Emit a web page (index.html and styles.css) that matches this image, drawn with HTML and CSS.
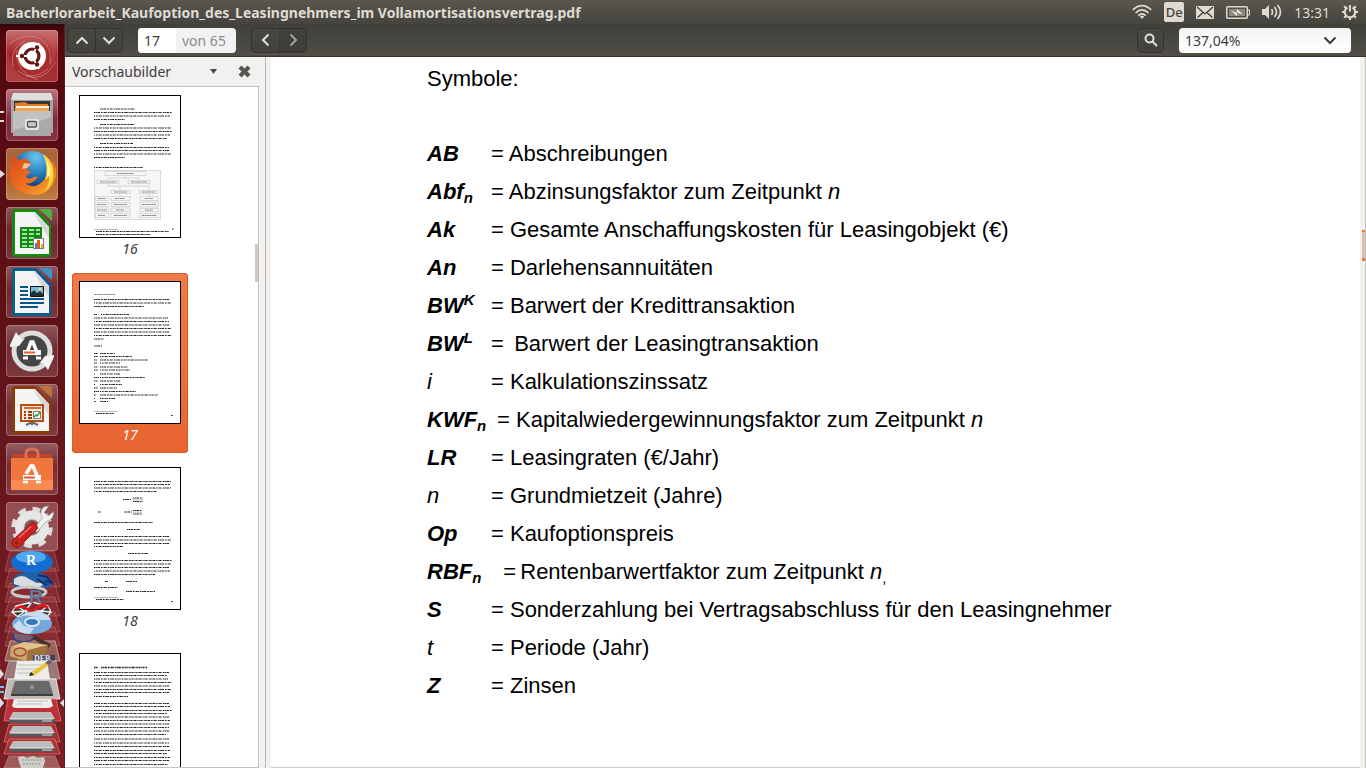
FILE: index.html
```html
<!DOCTYPE html>
<html lang="de">
<head>
<meta charset="utf-8">
<title>Bacherlorarbeit_Kaufoption_des_Leasingnehmers_im Vollamortisationsvertrag.pdf</title>
<link rel="stylesheet" href="styles.css">
</head>
<body>
<div class="desktop">
  <header class="panel">
    <h1 class="panel-title">Bacherlorarbeit_Kaufoption_des_Leasingnehmers_im Vollamortisationsvertrag.pdf</h1>
    <div class="indicators">
      <svg width="20" height="16" viewBox="0 0 20 16" fill="none" stroke="#dfdbd2" stroke-width="1.7"><path d="M.8 5.8Q10-2.4 19.2 5.8M3.6 8.8Q10 3 16.4 8.8M6.3 11.6Q10 8.400 13.7 11.6"/><path d="M7.800 12.600Q10 11 12.200 12.600L10 15z" fill="#dfdbd2" stroke="none"/></svg>
      <span class="keyboard">De</span>
      <svg width="18" height="13" viewBox="0 0 18 13"><path d="M0 0h18v13H0z" fill="#dfdbd2"/><path d="M1 1l8 7 8-7M1.500 11.500L7 6.500M16.500 11.500L11 6.500" fill="none" stroke="#3f3e39" stroke-width="1.300"/></svg>
      <svg width="24" height="13" viewBox="0 0 24 13"><rect x=".75" y=".75" width="20.500" height="11.500" rx="1" fill="none" stroke="#dfdbd2" stroke-width="1.500"/><path d="M3 3h16v7H3z" fill="#8b8981"/><path d="M21.500 4h2v5h-2" fill="none" stroke="#dfdbd2" stroke-width="1.200"/><path d="M5 4.500l6 2.500V3l6 5.500-6-2V10z" fill="#efece6"/></svg>
      <svg width="20" height="16" viewBox="0 0 20 16"><path d="M0 5h3l4-4v14l-4-4H0z" fill="#dfdbd2"/><path d="M9.500 5q2 3 0 6M12.500 3q4 5 0 10M15.500 1q6 7 0 14" fill="none" stroke="#dfdbd2" stroke-width="1.700"/></svg>
      <time class="clock">13:31</time>
      <svg width="16" height="16" viewBox="0 0 16 16" fill="none" stroke="#dfdbd2"><path d="M5.500 3.500a5.200 5.200 0 1 0 5 0" stroke-width="2"/><path d="M8 1v6.500" stroke-width="2"/><path d="M8 13v3M0 8h3M13 8h3M2.200 2.200l2 2M13.800 2.200l-2 2M2.200 13.800l2-2M13.800 13.800l-2-2" stroke-width="2.200"/></svg>
    </div>
  </header>

  <div class="workspace">
    <nav class="launcher" aria-label="Starter">
      <button class="tile dash" aria-label="Dash-Startseite"><svg viewBox="0 0 52 52"><g fill="none" stroke="#e39a98" stroke-opacity=".55"><path d="M3 14Q18 2 33 8 47 16 44 34M7 37Q3 18 19 11M12 41Q26 52 42 39M20 46Q39 52 50 31M10 20Q10 43 32 50"/></g><path d="M14 0Q35-1 44 15q4 13-3 25 11-9 10-28Q50 0 42 0zM2 20q1 25 25 31H5q-4 0-4-5z" fill="#d47572" opacity=".25"/><circle cx="26" cy="26" r="14" fill="#fff"/><circle cx="26" cy="26" r="7" fill="none" stroke="#631414" stroke-width="3.200"/><path d="M26 26H10M26 26l7-13M26 26l7 13" stroke="#fff" stroke-width="1.800"/><g fill="#631414"><circle cx="16" cy="26" r="2.200"/><circle cx="31" cy="17.500" r="2.200"/><circle cx="31" cy="34.500" r="2.200"/></g></svg></button>
      <button class="tile files" aria-label="Dateien"><svg viewBox="0 0 52 52"><path d="M7 4h38l2 8v32H5V12z" fill="#a5a5a5"/><path d="M7 4h38l2 7H5z" fill="#dedede"/><path d="M8 12h36v12H8z" fill="#363636"/><path d="M9 14l10-1 3 2h20v8H9z" fill="#e67a22"/><path d="M10 17h33v5H10z" fill="#fff0dd"/><path d="M9 19h34v5H9z" fill="#f3a44d"/><path d="M7 22h38v25H7z" fill="#a9a9a9"/><path d="M7 22h38v6L7 42z" fill="#c1c1c1"/><rect x="19" y="30" width="14" height="11" rx="2" fill="#e4e4e4"/><rect x="21.500" y="32.500" width="9" height="5.500" rx="1" fill="#c9c9c9" stroke="#555" stroke-width="1.300"/></svg></button>
      <button class="tile firefox" aria-label="Firefox"><svg viewBox="0 0 52 52"><defs><radialGradient id="globe" cx=".6" cy=".15" r=".8"><stop offset="0" stop-color="#68c5ed"/><stop offset=".55" stop-color="#2275b5"/><stop offset="1" stop-color="#102e63"/></radialGradient><linearGradient id="fox" x1="0" y1="0" x2="1" y2="1"><stop offset="0" stop-color="#d9481c"/><stop offset=".6" stop-color="#ef7622"/><stop offset="1" stop-color="#f8ba30"/></linearGradient></defs><circle cx="26" cy="24" r="21" fill="url(#globe)"/><path d="M7 8q4 1 6 4 6-3 10 1l2 4-5 4 5 3-5 4q2 5 8 1 4-2 3 1-5 7-12 5 8 7 17-1 8-7 6-17 8 8 6 13 2-8-4-20 10 10 4 24-7 14-21 13Q7 45 4 30q-1-9 3-22z" fill="url(#fox)"/><path d="M37 6q13 9 10 24-2 9-8 13 5-9 4-15-2 3-4 4 4-13-2-26z" fill="#ffd93a"/><path d="M39 10q7 10 5 19l-3-2q2-8-2-17z" fill="#fff5a0"/><path d="M18 15l7 1-4 4-5 1z" fill="#ffc091"/></svg></button>
      <button class="tile office" aria-label="LibreOffice Calc"><svg viewBox="0 0 52 52"><path d="M9 2h21l15 16v30q0 2-2 2H9q-3 0-3-3V5q0-3 3-3z" fill="#168b12"/><path d="M33 2h10q3 0 3 3v9z" fill="#52ad43"/><path d="M9 5h20l14 15v27H9z" fill="#f5f5f5"/><path d="M27 5l16 15v12z" fill="#d8d8d8"/><path d="M14 20h22v21H14z" fill="#128813"/><path d="M16 22h5v2h-5zM23 22h5v2h-5zM30 22h4v2h-4zM16 26h5v2h-5zM23 26h5v2h-5zM30 26h4v2h-4zM16 30h5v2h-5zM23 30h5v2h-5zM16 34h5v2h-5zM23 34h4v2h-4zM16 38h5v2h-5zM23 38h4v2h-4z" fill="#9be89c"/><path d="M27.500 31.500h10v10h-10z" fill="#fff" stroke="#777"/><path d="M29 36h2v5h-2z" fill="#2b8dcd"/><path d="M31 33h3v8h-3z" fill="#e65a17"/><path d="M35 37h2v4h-2z" fill="#ecb338"/></svg></button>
      <button class="tile office" aria-label="LibreOffice Writer"><svg viewBox="0 0 52 52"><path d="M9 2h21l15 16v30q0 2-2 2H9q-3 0-3-3V5q0-3 3-3z" fill="#0b5d91"/><path d="M33 2h10q3 0 3 3v9z" fill="#3c93ca"/><path d="M9 5h20l14 15v27H9z" fill="#f5f5f5"/><path d="M27 5l16 15v12z" fill="#d8d8d8"/><path d="M14 21h8M14 25h8M14 29h8M14 33h24M14 37h24M14 41h18" stroke="#08558b" stroke-width="2"/><path d="M24.500 20.500h13v10h-13z" fill="#76bce7" stroke="#111"/><path d="M25 30v-3l3-3 3 3 3-2 3 3v2z" fill="#27313a"/><circle cx="34" cy="23" r="1.500" fill="#ffe269"/></svg></button>
      <button class="tile" aria-label="Aktualisierungsverwaltung"><svg viewBox="0 0 52 52"><circle cx="26" cy="26" r="18" fill="#454545" stroke="#ddd" stroke-width="5"/><path d="M4 20L10 7l5 7 4-1-6 8-9 1zM48 32l-6 13-5-7-4 1 6-8 9-1z" fill="#f3f3f3"/><path d="M20 30L25 17h2l5 13" fill="none" stroke="#fff" stroke-width="3.500"/><path d="M17 25h18v5H17z" fill="#fff"/><path d="M18 26.500h11v2H18z" fill="#ee5b23"/><path d="M17 33h5M30 33h5" stroke="#fff" stroke-width="3"/></svg></button>
      <button class="tile office" aria-label="LibreOffice Impress"><svg viewBox="0 0 52 52"><path d="M9 2h21l15 16v30q0 2-2 2H9q-3 0-3-3V5q0-3 3-3z" fill="#8e3b0b"/><path d="M33 2h10q3 0 3 3v9z" fill="#bd733d"/><path d="M9 5h20l14 15v27H9z" fill="#f5f5f5"/><path d="M27 5l16 15v12z" fill="#d8d8d8"/><path d="M15 21h22v16H15z" fill="#fdece0" stroke="#b84a13" stroke-width="2"/><path d="M18 24h17" stroke="#d66b2b" stroke-width="2"/><path d="M18 28h2M18 31h2M18 34h2M22 28h4M22 31h4M22 34h4" stroke="#983c0c" stroke-width="2"/><path d="M27.500 27.500h7v7h-7z" fill="#fff" stroke="#777"/><path d="M28 33l2-2 1 1 3-4" fill="none" stroke="#249922" stroke-width="1.300"/><path d="M20 41l6-3 6 3M26 38v3" fill="none" stroke="#666" stroke-width="2"/></svg></button>
      <button class="tile" aria-label="Ubuntu Software-Center"><svg viewBox="0 0 52 52"><path d="M7 11h38l2 36H5z" fill="#ed682d"/><path d="M7 11h38v10H7z" fill="#bf4520"/><path d="M5 15h42v22H5z" fill="#f1763c"/><path d="M5 37h42v10H5z" fill="#f88a52"/><path d="M20 17V10q0-4 6-4t6 4v7" fill="none" stroke="#d86f50" stroke-width="3"/><path d="M20 31L25 23h2l5 12" fill="none" stroke="#fff" stroke-width="3.500"/><path d="M17 32h18v5H17z" fill="#fff"/><path d="M18 33.500h11v2H18z" fill="#ee5b23"/><path d="M17 39h5M30 39h5" stroke="#fff" stroke-width="2.500"/></svg></button>
      <button class="tile settings" aria-label="Systemeinstellungen"><svg viewBox="0 0 52 52"><circle cx="26" cy="27" r="19" fill="none" stroke="#ddd" stroke-width="6" stroke-dasharray="8 6.920"/><circle cx="26" cy="27" r="13" fill="none" stroke="#e6e6e6" stroke-width="10"/><circle cx="26" cy="27" r="8.500" fill="#8c5354" stroke="#bbb"/><path d="M28 28L37 17q-4-8 2-12l5-1-5 7 4 4 6-5q0 9-7 10L31 32z" fill="#f2f2f2" stroke="#888" stroke-width=".6"/><path d="M26 22q5 0 6 6L14 46q-4 4-8 1-3-4 1-8z" fill="#ce2221" stroke="#8b1010"/><path d="M12 38l13-12" stroke="#ee716b" stroke-width="1.500"/><circle cx="9.500" cy="43.500" r="1.600" fill="#631"/></svg></button>
      <svg class="stack" width="65" height="217" viewBox="0 0 65 217" aria-hidden="true">
        <g fill="#b65a5c" fill-opacity=".28" stroke="#d99a9a" stroke-opacity=".5" stroke-width=".7"><path d="M10 0h44l5 20H5z"/><path d="M10 17h45l5 19H5z"/><path d="M10 32h45l5 19H5z"/><path d="M10 46h45l5 19H5z"/><path d="M10 61h45l5 20H5z"/><path d="M10 76h45l5 19H5z"/></g>
        <path d="M10 90h45l5 20H5z" fill="#a67e70" fill-opacity=".7" stroke="#c6a295"/>
        <ellipse cx="32" cy="11" rx="21" ry="11" fill="#146bd0"/><ellipse cx="31" cy="6" rx="15" ry="6" fill="#4ea7f0"/><text class="blue-r" x="26" y="14">R</text>
        <path d="M12 32q1-9 12-10 20-3 27 6 3 7-5 9H17z" fill="#2061a5"/><path d="M14 28q8-6 15 0l8 4q4-1 6 2-7 5-17 3l-12-4z" fill="#dadce0"/><path d="M38 24l9 2 5 6-7-2M37 28l10 6" fill="none" stroke="#112e69" stroke-width="2"/>
        <ellipse cx="29" cy="41" rx="17" ry="5" fill="none" stroke="#c7cac6" stroke-width="3"/>
        <path d="M16 55l16-4 16 4 3 6-6 6-13 1-14-2-6-5zM16 55l9 5-8 6M32 51l-7 9 7 8 9-8 7-5M25 60h16l10 1M12 61l13-1M41 60l4 7" fill="#3b373a" stroke="#f4f4f4" stroke-width="1.300"/><text class="grey-r" x="29" y="52">R</text><path d="M15 58q7-5 12 0t10-1 11 0" fill="none" stroke="#e4171d" stroke-width="2.500"/>
        <ellipse cx="32" cy="73" rx="20" ry="10" fill="#77a8dc"/><path d="M18 67q10-6 22 2h11q-2-6-11-8-14-2-22 6zM13 75q5 8 17 8l4-6-10-2-5-6z" fill="#c4dcf2"/><ellipse cx="32" cy="71" rx="7" ry="4" fill="#3475bb" stroke="#d9e9f8" stroke-width="2"/>
        <path d="M13 82q-1 9 10 9 10 0 12-6" fill="#785f70" stroke="#40417e" stroke-width="2"/><path d="M33 86l17 9" stroke="#463130" stroke-width="4"/>
        <path d="M11 96l13-5 24 3-5 15-17 2-16-5z" fill="#9e733c"/><path d="M11 96l17 3-2 11-16-5z" fill="#cdaa6a"/><path d="M11 96l13-5 24 3-20 5z" fill="#e0c28b"/><ellipse cx="20" cy="101" rx="6" ry="4" fill="none" stroke="#b24243" stroke-width="1.500"/><path d="M33 104h22v6H33z" fill="#42405d"/>
        <path d="M9 110h47l4 18H4z" fill="#aaa09e" fill-opacity=".7" stroke="#ddd" stroke-opacity=".5"/><text class="deb" x="34" y="110">DEB</text><path d="M17 110h30l3 18H14z" fill="#ecece9"/><path d="M18 114h25M17 118h26M17 122h20" stroke="#c1c1be"/><path d="M30 122l15-10 4 2-14 10-6 1z" fill="#e9c238"/><path d="M45 112l4-3 3 2-3 3z" fill="#6b5368"/><path d="M29 125l2-4 3 3z" fill="#222"/>
        <path d="M8 128h48l4 20H4z" fill="#c2b9b7" stroke="#fff" stroke-opacity=".75"/><path d="M15 130h34l4 13H11z" fill="#696969"/><path d="M11 143h42v2H11z" fill="#3e3e3e"/><circle cx="32" cy="136" r="2" fill="#999"/>
        <path d="M8 148h48l5 22H4z" fill="#be3037" stroke="#d88484" stroke-width=".7"/><path d="M14 148h37l2 7q-2 2-5 2H16q-3 0-4-2z" fill="#eee"/><path d="M17 150h31M17 153h25" stroke="#bbb"/>
        <g id="disk"><path d="M13 161h38l4 7H9z" fill="#bcbcbc"/><path d="M9 168h46v3q-1 1-3 1H12q-3 0-3-2z" fill="#595959"/><path d="M10 168h43" stroke="#eee"/><path d="M42 170h10" stroke="#ddd"/></g>
        <path d="M9 173h46l5 18H4z" fill="#be3037" fill-opacity=".75" stroke="#d88484" stroke-width=".7"/><use href="#disk" y="14"/><path d="M9 188h46l5 15H4z" fill="#be3037" fill-opacity=".75" stroke="#d88484" stroke-width=".7"/><use href="#disk" y="29"/><path d="M9 205h46l5 12H4z" fill="#9e5b58" stroke="#c48a88" stroke-width=".7"/><path d="M18 206l5-1 4 2 6-2 5 2 6-1 1 4-2 7H21l-2-6z" fill="#cfcfc8"/><path d="M22 209h19M23 213h18" stroke="#8f8f89" stroke-dasharray="2 1"/>
        <path d="M0 118l4 5-4 5zM0 147l4 5-4 5zM65 147l-5 5 5 5z" fill="#ddd"/><path d="M0 136h4M0 141h4" stroke="#6dc0f0" stroke-width="2"/>
      </svg>
    </nav>

    <main class="viewer">
      <div class="toolbar" role="toolbar" aria-label="Navigation">
        <div class="button-pair">
          <button aria-label="Vorherige Seite"><svg width="14" height="9" viewBox="0 0 14 9"><path d="M1.500 7.500L7 2l5.500 5.500"/></svg></button>
          <button aria-label="Nächste Seite"><svg width="14" height="9" viewBox="0 0 14 9"><path d="M1.500 1.500L7 7l5.500-5.500"/></svg></button>
        </div>
        <div class="page-box">
          <input id="page" type="text" value="17" aria-label="Seite">
          <label for="page">von 65</label>
        </div>
        <div class="button-pair">
          <button aria-label="Zurück"><svg width="9" height="14" viewBox="0 0 9 14"><path d="M7.500 1.500L2 7l5.500 5.500"/></svg></button>
          <button class="inactive" aria-label="Vor"><svg width="9" height="14" viewBox="0 0 9 14"><path d="M1.500 1.500L7 7l-5.500 5.500"/></svg></button>
        </div>
        <div class="toolbar-end">
          <button class="search" aria-label="Suchen"><svg width="14" height="14" viewBox="0 0 14 14"><circle cx="5.500" cy="5.500" r="4"/><path d="M8.500 8.500l4.500 4.500"/></svg></button>
          <div class="zoom-box">
            <select aria-label="Vergrößerung"><option>137,04%</option></select>
            <svg width="14" height="9" viewBox="0 0 14 9"><path d="M1.500 1.500L7 7l5.500-5.500"/></svg>
          </div>
        </div>
      </div>

      <div class="content">
        <aside class="sidebar">
          <div class="sidebar-head">
            <button class="view-picker"><span>Vorschaubilder</span><svg width="7" height="5" viewBox="0 0 7 5"><path d="M0 0h7L3.500 5z" fill="#4c4c4c"/></svg></button>
            <button class="close" aria-label="Seitenleiste schließen"><svg width="13" height="13" viewBox="0 0 13 13"><path d="M2 2l9 9M11 2l-9 9" stroke="#555552" stroke-width="4.200"/></svg></button>
          </div>
          <div class="thumbs">
            <a class="thumb" href="#p16">
              <svg width="102" height="143" viewBox="0 0 102 143"><g class="ink"><path d="M21 14h35M21 29.500h35M21 48.500h33"/><path d="M15 17.500h78M15 24.500h31M15 36.500h78M15 43.500h73M15 55.500h76M15 62.500h31"/><path class="shift" d="M15 21h76M15 33h77M15 40h76M15 52.500h75M15 59h77M15 72.500h49"/></g><g class="chart"><path d="M15.500 75.500h66v49h-66zM26 76.500h41v4H26zM18 85.500h22v3H18zM49 85.500h22v3H49zM32 95.500h19v3H32zM60 95.500h19v3H60zM16.500 101.500h13v4h-13zM16.500 107.500h13v4h-13zM16.500 113h13v3.500h-13zM16.500 118.500h13v4h-13zM32 101.500h19v4H32zM32 107.500h19v4H32zM32 113h19v3.500H32zM32 118.500h19v4H32zM61 101.500h18v4H61zM61 107h18v5H61zM61 113.500h18v3H61zM61 118.500h18v4H61z"/><path d="M46 81v2M29 85v-2h31v2M29 89v2h41v4M41 91v4M41 99v2M70 99v2" fill="none"/></g><path class="faint" d="M38 78.500h17M21 87h16M52 87h16M35 97h13M63 97h13M19 103.500h8M18 109.500h9M18 115h10M19 120.500h7M36 103.500h10M35 109.500h13M37 115h8M35 120.500h13M66 103.500h8M63 109.500h14M66 115h8M63 120.500h14"/><path d="M15 134.500h24" stroke="#777" stroke-width=".5"/><path class="ink" d="M17 136.500h73M17 139.500h55M93 134h1.500"/></svg>
              <span>16</span>
            </a>
            <a class="thumb current" href="#p17" aria-current="page">
              <svg width="102" height="143" viewBox="0 0 102 143"><path class="faint" d="M15 13.500h21"/><g class="ink"><path class="shift" d="M15 22h77M22 33.500h28M15 40.500h75M15 47.500h77M15 54.500h78"/><path d="M15 18.500h76M15 25.500h50M15 33.500h3M15 37h74M15 44h76M15 51h76M15 58h10M15 65h8"/><path d="M15 72.500h4M15 75.500h4M15 79h3M15 82h3M15 86h4M15 89h4M15 93h1M15 96.500h5M15 100h4M15 103.500h1M15 107h4M15 110.500h5M15 114h2M15 117.500h1M15 120.500h2"/><path d="M21 72.500h15M21 79h48M21 86h28M21 93h20M21 100h21M21 107h17M21 114h58M21 120.500h8M17 132.500h18M92 134.500h2"/><path class="shift" d="M21 75.500h32M21 82h20M21 89h30M21 96.500h45M21 103.500h22M21 110.500h36M21 117.500h15"/></g><path d="M15 130.500h24" stroke="#777" stroke-width=".5"/></svg>
              <span>17</span>
            </a>
            <a class="thumb" href="#p18">
              <svg width="102" height="143" viewBox="0 0 102 143"><g class="ink"><path class="shift" d="M15 17.500h76M15 24.500h63M15 73h77M15 79.500h29M15 97h77M15 104h76"/><path d="M15 14.500h77M15 21h77M44 32.500h8M54 31h10M54 34.500h10M19 45h3M45 45h8M54 43.500h9M54 47h9M15 55.500h59M48 62.500h14M15 69.500h76M15 76.500h76M49 86.500h20M15 93.500h78M15 100.500h75M15 107.500h61M26 114.500h3M47 114.500h11M15 120.500h24M47 124.500h29M17 132.500h28M92 134.500h2"/></g><path d="M54 32.800h10M54 45.200h9M15 130.500h24" stroke="#777" stroke-width=".5"/></svg>
              <span>18</span>
            </a>
            <a class="thumb" href="#p19" aria-label="19">
              <svg width="102" height="143" viewBox="0 0 102 143"><path class="ink strong" d="M15 14.500h4M22 14.500h46"/><path class="ink shift" d="M15 22.500h73M15 29.500h78M15 36.500h77M15 43.500h34M15 53.500h76M15 60.500h73M15 67.500h76M15 74.500h75M15 81.500h72M15 90h75M15 97.500h76M15 104.500h76M15 111.500h74"/><path class="ink" d="M15 19.500h75M15 26h74M15 33h76M15 39.500h76M15 50.500h75M15 57.500h78M15 64h76M15 71h75M15 78h76M15 86h76M15 93.500h76M15 100.500h73M15 107.500h75M15 115h76"/></svg>
            </a>
            <div class="thumbs-scroll"></div>
          </div>
        </aside>

        <article class="page">
          <p class="lead">Symbole:</p>
          <dl class="symbols">
            <div><dt>AB</dt><dd>= Abschreibungen</dd></div>
            <div><dt>Abf<sub>n</sub></dt><dd>= Abzinsungsfaktor zum Zeitpunkt <i>n</i></dd></div>
            <div><dt>Ak</dt><dd>= Gesamte Anschaffungskosten für Leasingobjekt (€)</dd></div>
            <div><dt>An</dt><dd>= Darlehensannuitäten</dd></div>
            <div><dt>BW<sup>K</sup></dt><dd>= Barwert der Kredittransaktion</dd></div>
            <div><dt>BW<sup>L</sup></dt><dd>= <small>&nbsp;</small>Barwert der Leasingtransaktion</dd></div>
            <div><dt class="light">i</dt><dd>= Kalkulationszinssatz</dd></div>
            <div><dt>KWF<sub>n</sub></dt><dd>&nbsp;= Kapitalwiedergewinnungsfaktor zum Zeitpunkt <i>n</i></dd></div>
            <div><dt>LR</dt><dd>= Leasingraten (€/Jahr)</dd></div>
            <div><dt class="light">n</dt><dd>= Grundmietzeit (Jahre)</dd></div>
            <div><dt>Op</dt><dd>= Kaufoptionspreis</dd></div>
            <div><dt>RBF<sub>n</sub></dt><dd>&nbsp;&nbsp;=<small>&nbsp;</small>Rentenbarwertfaktor zum Zeitpunkt <i>n</i><sub>,</sub></dd></div>
            <div><dt>S</dt><dd>= Sonderzahlung bei Vertragsabschluss für den Leasingnehmer</dd></div>
            <div><dt class="light">t</dt><dd>= Periode (Jahr)</dd></div>
            <div><dt>Z</dt><dd>= Zinsen</dd></div>
          </dl>
        </article>
        <div class="page-scroll"><div class="page-scroll-thumb"></div></div>
      </div>
    </main>
  </div>
</div>
</body>
</html>
```
FILE: styles.css
```css
* { box-sizing: border-box; }

body {
  margin: 0;
  font-family: "Noto Sans", "Open Sans", sans-serif;
  font-size: 14px;
  color: #3c3c3c;
}

button {
  margin: 0;
  padding: 0;
  border: 0;
  background: none;
  font: inherit;
  color: inherit;
}

svg { display: block; flex: none; }

.desktop {
  display: flex;
  flex-direction: column;
  height: 100vh;
  overflow: hidden;
}

/* Top panel */
.panel {
  display: flex;
  align-items: center;
  justify-content: space-between;
  flex: none;
  height: 24px;
  padding: 0 8px 0 6px;
  background: linear-gradient(#59574f, #44433d);
  color: #dfdbd2;
}

.panel-title {
  margin: 0;
  font-size: 14px;
  font-weight: 700;
  white-space: nowrap;
}

.indicators {
  display: flex;
  align-items: center;
  gap: 12px;
}

.keyboard {
  width: 20px;
  height: 20px;
  border-radius: 2px;
  background: #dfdbd2;
  color: #45443e;
  font-size: 13px;
  font-weight: 500;
  line-height: 20px;
  text-align: center;
}

.clock { font-size: 14px; }

.workspace {
  display: flex;
  flex: 1;
  min-height: 0;
}

/* Launcher */
.launcher {
  display: flex;
  flex-direction: column;
  align-items: center;
  flex: none;
  gap: 7px;
  width: 65px;
  padding-top: 6px;
  border-right: 1px solid #5b1b20;
  background: linear-gradient(#35060a, #55090f 14px, #5d1218 40%, #7d1f25);
  overflow: hidden;
}

.tile {
  position: relative;
  flex: none;
  width: 52px;
  height: 52px;
  border-radius: 4px;
  background: linear-gradient(rgba(255, 255, 255, .3), rgba(255, 255, 255, .1) 45%, rgba(255, 255, 255, .17));
  box-shadow: inset 0 0 0 1px rgba(255, 220, 220, .28);
}

.tile svg { width: 100%; height: 100%; }
.tile.dash { background: linear-gradient(#c77171, #a62629 45%, #a43335); }
.tile.files { background: linear-gradient(#b97983, #7d2636 60%, #8b3446); }
.tile.firefox { background: linear-gradient(#a7663f, #b2652a 60%, #bc8049); }
.tile.settings { height: 49px; background: rgba(255, 220, 220, .28); }

.tile.files::before,
.tile.firefox::before {
  content: "";
  position: absolute;
  top: 22px;
  left: -6px;
}

.tile.files::before {
  width: 4px;
  height: 7px;
  border: solid #ddd;
  border-width: 2px 0;
}

.tile.firefox::before {
  border: solid transparent;
  border-width: 4px 0 4px 5px;
  border-left-color: #ddd;
}

.stack { margin-top: -7px; }
.blue-r { font: bold 14px "Liberation Serif", serif; fill: #fff; }
.grey-r { font: bold 19px "Liberation Sans", sans-serif; fill: #6f82a7; stroke: #3d4662; stroke-width: .5px; }
.deb { font: bold 8px "Liberation Serif", serif; fill: #eee; }

/* Toolbar */
.viewer {
  display: flex;
  flex-direction: column;
  flex: 1;
  min-width: 0;
}

.toolbar {
  display: flex;
  align-items: center;
  flex: none;
  gap: 15px;
  height: 33px;
  padding: 0 15px 0 2px;
  border-bottom: 1px solid #35342f;
  background: linear-gradient(#403f3a, #504e47);
}

.toolbar svg {
  fill: none;
  stroke: #e2dfd8;
  stroke-width: 2px;
}

.button-pair,
.search {
  display: flex;
  height: 25px;
  border: 1px solid #34332f;
  border-radius: 4px;
  background: linear-gradient(#484740, #42413b);
  box-shadow: 0 1px rgba(255, 255, 255, .06);
}

.button-pair button {
  display: grid;
  place-items: center;
  width: 27px;
}

.button-pair button + button { border-left: 1px solid #34332f; }
.button-pair .inactive { background: #3d3c37; opacity: .6; }

.page-box {
  display: flex;
  align-items: center;
  width: 98px;
  height: 25px;
  border-radius: 4px;
  background: #f3f2f2;
  overflow: hidden;
}

.page-box input {
  width: 38px;
  height: 100%;
  padding: 0 0 0 6px;
  border: 0;
  background: #fff;
  font: inherit;
  color: #3c3c3c;
}

.page-box label { padding-left: 6px; color: #8b8b8b; }

.toolbar-end {
  display: flex;
  align-items: center;
  gap: 15px;
  margin-left: auto;
}

.search {
  align-items: center;
  justify-content: center;
  width: 27px;
}

.zoom-box {
  display: grid;
  align-items: center;
  width: 172px;
  height: 25px;
  border-radius: 4px;
  background: linear-gradient(#f4f4f4, #fff);
}

.zoom-box select,
.zoom-box svg { grid-area: 1 / 1; }

.zoom-box select {
  appearance: none;
  height: 25px;
  padding: 0 6px;
  border: 0;
  background: none;
  font: inherit;
  color: #3c3c3c;
}

.zoom-box svg {
  justify-self: end;
  margin-right: 14px;
  stroke: #3c3c3c;
  pointer-events: none;
}

/* Sidebar */
.content {
  display: flex;
  flex: 1;
  min-height: 0;
  background: #f2f1f0;
}

.sidebar {
  display: flex;
  flex-direction: column;
  flex: none;
  width: 201px;
  border-right: 1px solid #b8b4ae;
}

.sidebar-head {
  display: flex;
  align-items: center;
  flex: none;
  gap: 21px;
  height: 29px;
  padding: 0 14px 0 7px;
}

.view-picker {
  display: flex;
  align-items: center;
  justify-content: space-between;
  flex: 1;
}

.thumbs {
  position: relative;
  display: flex;
  flex-direction: column;
  align-items: flex-start;
  flex: 1;
  gap: 6px;
  min-height: 0;
  margin-right: 6px;
  padding-left: 7px;
  border: solid #c5c2bd;
  border-width: 1px 1px 1px 0;
  background: #fff;
  overflow: hidden;
}

.thumb {
  flex: none;
  width: 116px;
  height: 180px;
  padding: 8px 7px;
  border-radius: 4px;
  font-style: italic;
  line-height: 22px;
  text-align: center;
  text-decoration: none;
  color: #3c3c3c;
}

.thumb svg {
  background: #fff;
  outline: 1px solid #000;
  outline-offset: -1px;
}

.thumb.current {
  background: linear-gradient(#f37a49, #e6642f);
  box-shadow: inset 0 0 0 1px #d35b2c;
  color: #fff;
}

.ink {
  fill: none;
  stroke: #222;
  stroke-width: 1px;
  stroke-dasharray: 1.600 .5 .9 .4 2.700 .9 1.200 .3 .8 .6 2 .4 .7 .8;
}

.shift { stroke-dashoffset: 5px; }
.ink.strong { stroke-width: 1.600px; }
.faint { stroke: #888; stroke-width: 1px; stroke-dasharray: 2 .4; }
.chart { fill: #f0f0f0; fill-opacity: .6; stroke: #c4c4c4; stroke-width: .6px; }

.thumbs-scroll {
  position: absolute;
  top: 157px;
  right: 0;
  width: 3px;
  height: 38px;
  background: #cdc9c5;
}

/* Document */
.page {
  flex: 1;
  min-width: 0;
  margin-left: 5px;
  padding: 3px 0 0 156px;
  border-bottom: 1px solid #ccc;
  background: #fff;
  color: #000;
  font: 22px/38px "Liberation Sans", Arial, sans-serif;
  white-space: nowrap;
  overflow: hidden;
}

.lead { margin: 0 0 37px; }
.symbols { margin: 0; }
.symbols div { display: flex; }

.symbols dt {
  flex: none;
  width: 64px;
  font-style: italic;
  font-weight: 700;
}

.symbols dt.light { font-weight: 400; }
.symbols dd { margin: 0; }

.symbols sub,
.symbols sup,
.symbols small { font-size: 15px; line-height: 0; }
.symbols sub { vertical-align: -4px; }

.page-scroll {
  flex: none;
  width: 6px;
  padding-top: 173px;
  border-right: 1px solid #c5c2bd;
}

.page-scroll-thumb {
  height: 31px;
  margin-left: 2px;
  border: solid #f0743e;
  border-width: 2px 0 3px;
  background: #d8c0b5;
}
```
